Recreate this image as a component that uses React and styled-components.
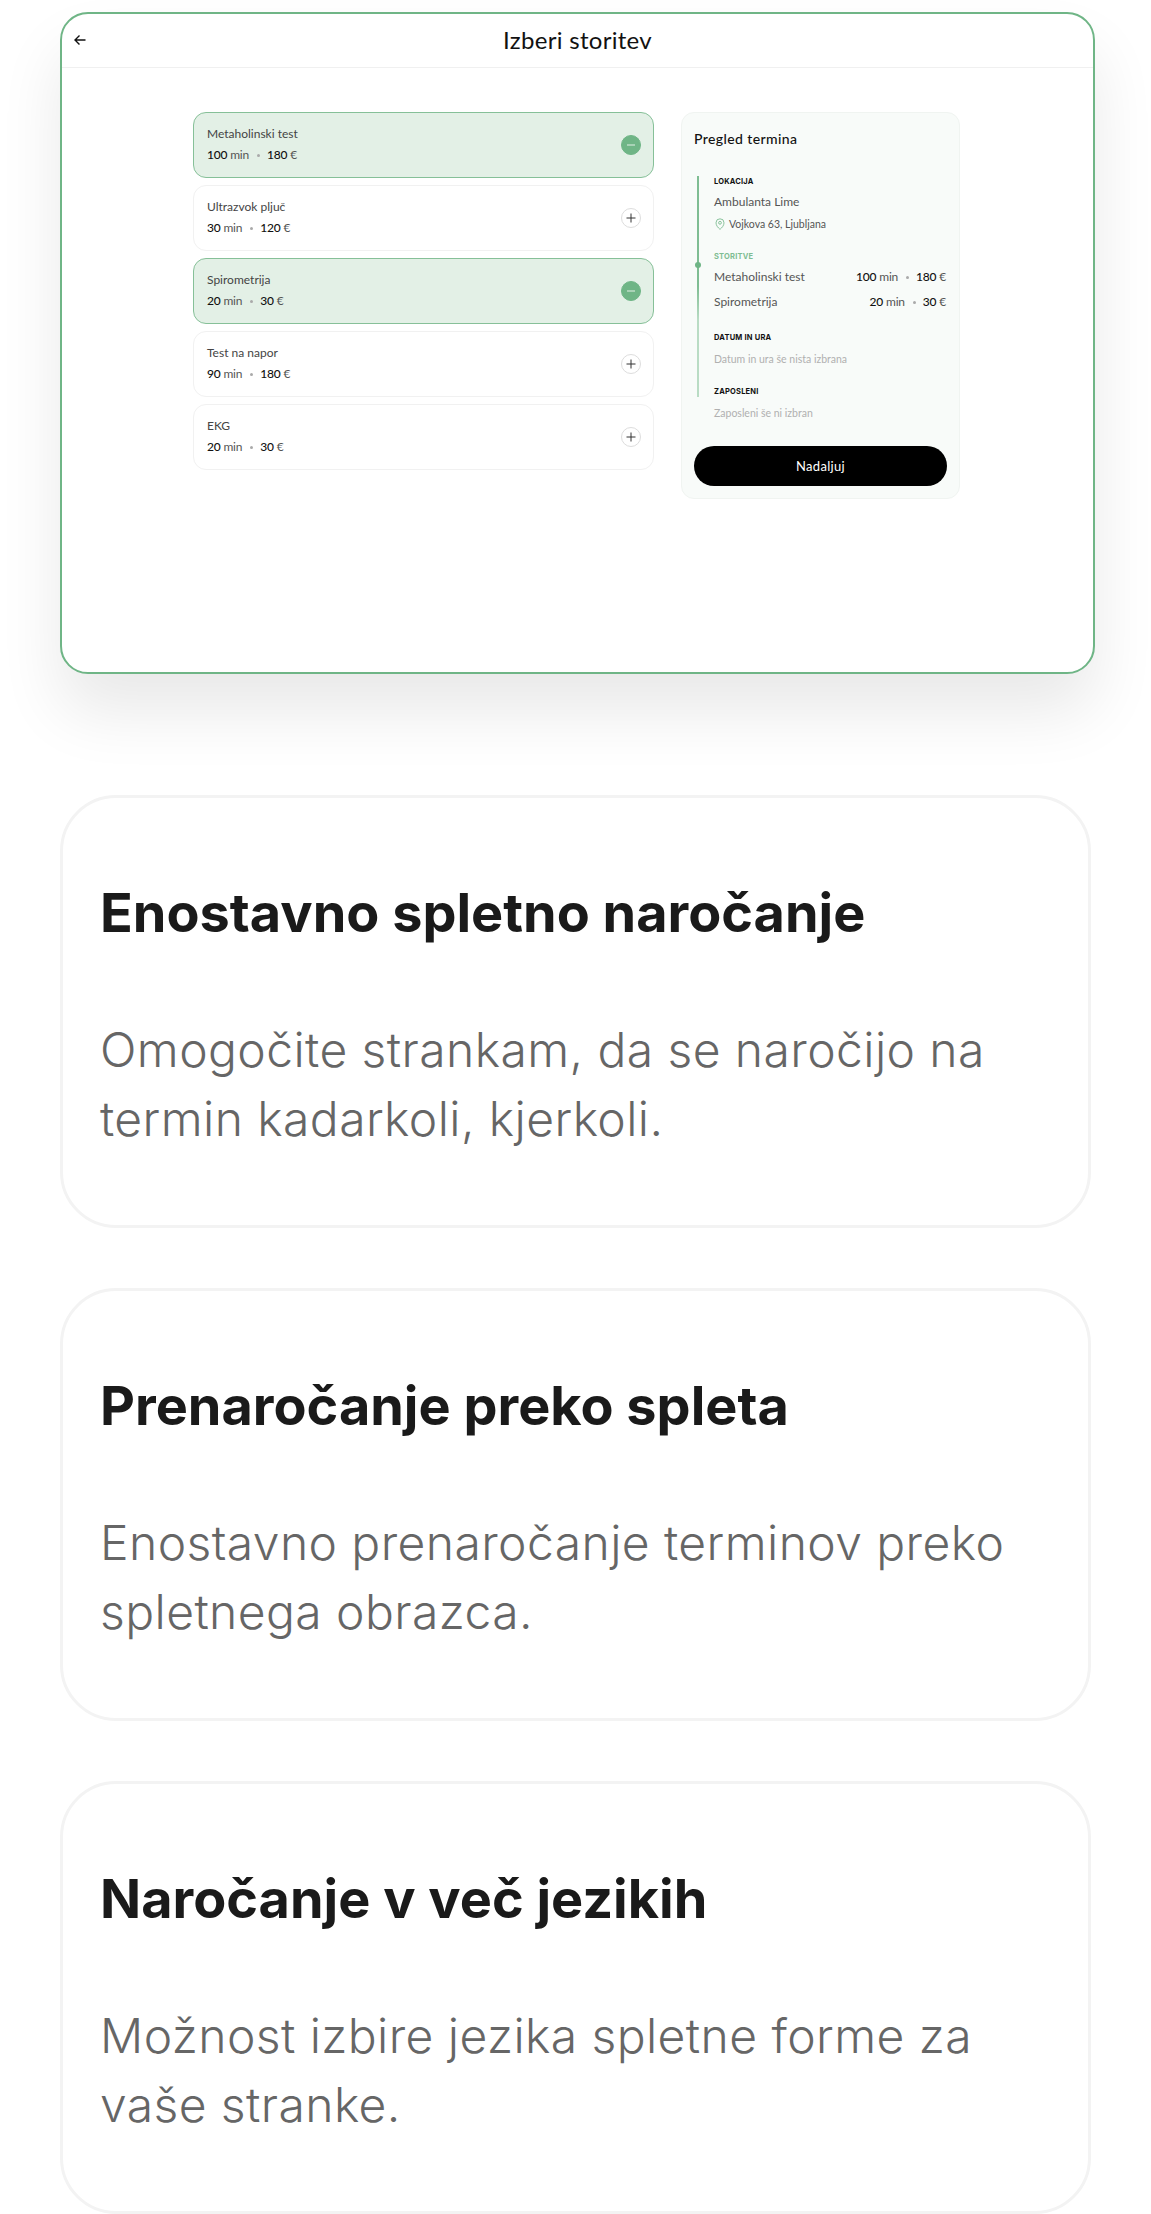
import React from "react";
import styled, { createGlobalStyle } from "styled-components";

const Global = createGlobalStyle`
  html, body { margin: 0; padding: 0; background: #fff; }
  * { box-sizing: border-box; }
`;

const MOCK = `"Lato", "Noto Sans", sans-serif`;
const GREEN = "#6fb586";

const Page = styled.div`
  width: 1151px;
  height: 2214px;
  overflow: hidden;
  padding: 12px 60px 0;
  font-family: "Inter", sans-serif;
`;

const Frame = styled.section`
  width: 1035px;
  height: 662px;
  margin-bottom: 121px;
  background: #fff;
  border: 2px solid ${GREEN};
  border-radius: 28px;
  box-shadow: 0 38px 64px rgba(0, 0, 0, 0.09);
  font-family: ${MOCK};
  color: #222;
`;

const Bar = styled.header`
  position: relative;
  height: 54px;
  display: flex;
  align-items: center;
  justify-content: center;
  padding-bottom: 3px;
  border-bottom: 1px solid #f0f0f0;
`;

const BarTitle = styled.h2`
  margin: 0;
  font-size: 24px;
  font-weight: 400;
  color: #111;
  letter-spacing: 0.3px;
`;

const BackIcon = styled.svg`
  position: absolute;
  left: 11px;
  top: 19px;
  width: 14px;
  height: 14px;
`;

const Content = styled.div`
  display: flex;
  align-items: flex-start;
  gap: 27px;
  padding: 44px 0 0 131px;
`;

const List = styled.div`
  width: 461px;
  display: flex;
  flex-direction: column;
  gap: 7px;
`;

const Row = styled.div`
  height: 66px;
  display: flex;
  align-items: center;
  justify-content: space-between;
  padding: 0 12px 0 13px;
  border-radius: 13px;
  border: 1px solid ${(p) => (p.$on ? "#86c098" : "#f1f1f1")};
  background: ${(p) => (p.$on ? "#e3f0e6" : "#fff")};
`;

const RowText = styled.div`
  display: flex;
  flex-direction: column;
  gap: 3px;
  padding-bottom: 1px;
`;

const RowName = styled.div`
  font-size: 12px;
  line-height: 18px;
  font-weight: 400;
  color: #444;
`;

const Meta = styled.div`
  display: flex;
  align-items: center;
  font-size: 12px;
  line-height: 18px;
  letter-spacing: -0.2px;
  color: #555;
  white-space: nowrap;
  b {
    font-weight: 500;
    color: #111;
  }
`;

const MetaDot = styled.span`
  width: 3px;
  height: 3px;
  margin: 0 7px 0 8px;
  border-radius: 50%;
  background: #aaa;
`;

const RoundBtn = styled.span`
  width: 20px;
  height: 20px;
  border-radius: 50%;
  display: flex;
  align-items: center;
  justify-content: center;
  background: ${(p) => (p.$on ? GREEN : "#fff")};
  border: 1px solid ${(p) => (p.$on ? GREEN : "#ddd")};
  svg {
    width: 10px;
    height: 10px;
  }
`;

const Panel = styled.aside`
  width: 279px;
  height: 387px;
  padding: 16px 12px 0;
  border: 1px solid #f0f4f1;
  border-radius: 13px;
  background: #f8fbf9;
`;

const PanelTitle = styled.h3`
  margin: 0 0 27px;
  font-size: 14px;
  line-height: 20px;
  font-weight: 500;
  color: #111;
  letter-spacing: 0.4px;
`;

const Timeline = styled.div`
  position: relative;
  padding-left: 20px;
  &::before {
    content: "";
    position: absolute;
    left: 3px;
    top: 0;
    height: 221px;
    width: 2px;
    background: linear-gradient(#7fbd93 0 50%, #b9dcc4 65% 100%);
  }
  &::after {
    content: "";
    position: absolute;
    left: 1px;
    top: 86px;
    width: 6px;
    height: 6px;
    border-radius: 50%;
    background: ${GREEN};
  }
`;

const Section = styled.div`
  margin-bottom: ${(p) => p.$gap}px;
`;

const Label = styled.div`
  font-family: "Inter", sans-serif;
  font-size: 7.5px;
  line-height: 12px;
  font-weight: 700;
  letter-spacing: 0.2px;
  color: ${(p) => (p.$green ? "#7fbd93" : "#111")};
`;

const Value = styled.div`
  margin-top: 6px;
  font-size: 12px;
  line-height: 16px;
  color: #555;
`;

const Address = styled.div`
  margin-top: 7px;
  display: flex;
  align-items: center;
  gap: 4px;
  padding-left: 1px;
  font-size: 10.5px;
  line-height: 14px;
  color: #555;
  svg {
    width: 10px;
    height: 12px;
  }
`;

const Service = styled.div`
  margin-top: ${(p) => p.$top}px;
  display: flex;
  justify-content: space-between;
  padding-right: 1px;
  font-size: 12px;
  line-height: 16px;
  color: #555;
`;

const ServiceMeta = styled(Meta)`
  font-size: 12px;
  line-height: 16px;
`;

const Placeholder = styled.div`
  margin-top: 7px;
  font-size: 10.5px;
  line-height: 16px;
  color: #b0b0b0;
`;

const Continue = styled.button`
  display: block;
  width: 253px;
  height: 40px;
  margin-top: 25px;
  border: 0;
  border-radius: 20px;
  background: #000;
  color: #fff;
  font-family: ${MOCK};
  font-size: 13px;
  letter-spacing: 0.3px;
  font-weight: 400;
`;

const Card = styled.article`
  width: 1031px;
  height: 433px;
  margin-bottom: 60px;
  padding: 73px 40px 0 37px;
  border: 3px solid #f3f3f3;
  border-radius: 56px;
  background: #fff;
`;

const CardTitle = styled.h2`
  margin: 0 0 60px;
  font-size: 54px;
  line-height: 84px;
  font-weight: 700;
  color: #1a1a1a;
`;

const CardText = styled.p`
  margin: 0;
  font-size: 48px;
  line-height: 69px;
  font-weight: 350;
  letter-spacing: 0.42px;
  color: #666;
`;

const Plus = () => (
  <svg viewBox="0 0 10 10" fill="none" stroke="#333" strokeWidth="1">
    <path d="M5 .5v9M.5 5h9" />
  </svg>
);
const Minus = () => (
  <svg viewBox="0 0 10 10" fill="none" stroke="#e3f0e6" strokeWidth="1">
    <path d="M1 5h8" />
  </svg>
);

const rows = [
  ["Metaholinski test", "100", "180", true],
  ["Ultrazvok pljuč", "30", "120", false],
  ["Spirometrija", "20", "30", true],
  ["Test na napor", "90", "180", false],
  ["EKG", "20", "30", false],
];

const cards = [
  ["Enostavno spletno naročanje", "Omogočite strankam, da se naročijo na termin kadarkoli, kjerkoli."],
  ["Prenaročanje preko spleta", "Enostavno prenaročanje terminov preko spletnega obrazca."],
  ["Naročanje v več jezikih", "Možnost izbire jezika spletne forme za vaše stranke."],
];

const Price = ({ min, eur, as: C = Meta }) => (
  <C>
    <b>{min}</b>&nbsp;min
    <MetaDot />
    <b>{eur}</b>&nbsp;€
  </C>
);

export default function App() {
  return (
    <Page>
      <Global />
      <Frame>
        <Bar>
          <BackIcon viewBox="0 0 14 14" fill="none" stroke="#111" strokeWidth="1.4">
            <path d="M12.5 7H2M6.5 2.5 2 7l4.5 4.5" />
          </BackIcon>
          <BarTitle>Izberi storitev</BarTitle>
        </Bar>
        <Content>
          <List>
            {rows.map(([name, min, eur, on]) => (
              <Row key={name} $on={on}>
                <RowText>
                  <RowName>{name}</RowName>
                  <Price min={min} eur={eur} />
                </RowText>
                <RoundBtn $on={on}>{on ? <Minus /> : <Plus />}</RoundBtn>
              </Row>
            ))}
          </List>
          <Panel>
            <PanelTitle>Pregled termina</PanelTitle>
            <Timeline>
              <Section $gap={20}>
                <Label>LOKACIJA</Label>
                <Value>Ambulanta Lime</Value>
                <Address>
                  <svg viewBox="0 0 10 12" fill="none" stroke="#6fb586" strokeWidth="0.8">
                    <path d="M5 11.4C3 9.6 1 7.5 1 4.8a4 4 0 0 1 8 0c0 2.7-2 4.8-4 6.6Z" />
                    <circle cx="5" cy="4.8" r="1.4" />
                  </svg>
                  Vojkova 63, Ljubljana
                </Address>
              </Section>
              <Section $gap={22}>
                <Label $green>STORITVE</Label>
                <Service $top={6}>
                  Metaholinski test
                  <Price min="100" eur="180" as={ServiceMeta} />
                </Service>
                <Service $top={9}>
                  Spirometrija
                  <Price min="20" eur="30" as={ServiceMeta} />
                </Service>
              </Section>
              <Section $gap={19}>
                <Label>DATUM IN URA</Label>
                <Placeholder>Datum in ura še nista izbrana</Placeholder>
              </Section>
              <Section $gap={0}>
                <Label>ZAPOSLENI</Label>
                <Placeholder>Zaposleni še ni izbran</Placeholder>
              </Section>
            </Timeline>
            <Continue>Nadaljuj</Continue>
          </Panel>
        </Content>
      </Frame>
      {cards.map(([title, text]) => (
        <Card key={title}>
          <CardTitle>{title}</CardTitle>
          <CardText>{text}</CardText>
        </Card>
      ))}
    </Page>
  );
}
